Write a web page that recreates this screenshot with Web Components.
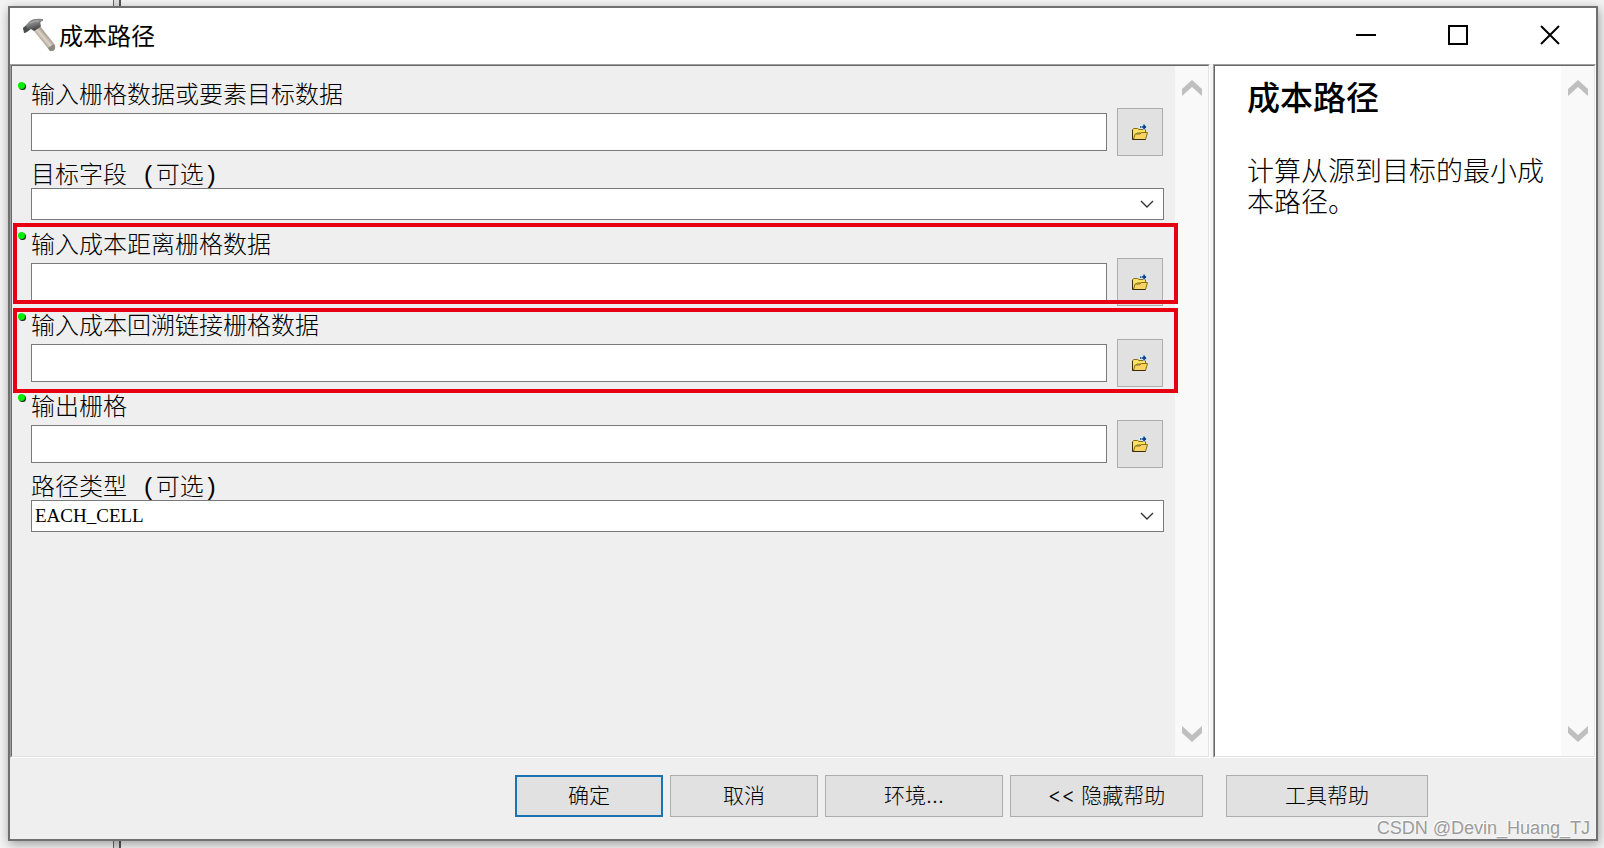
<!DOCTYPE html>
<html lang="zh-CN">
<head>
<meta charset="UTF-8">
<meta name="viewport" content="width=device-width, initial-scale=1.0">
<title>成本路径</title>
<style>
  html, body {
    height: 100%;
    margin: 0;
  }
  body {
    font: 300 24px/28px 'Liberation Mono', 'Noto Sans CJK SC', sans-serif;
    color: #000;
    background: #f1f1f1;
    overflow: hidden;
  }
</style>
</head>
<body>
<tool-dialog>
  <title-bar slot="title">成本路径</title-bar>
  <scroll-pane slot="form">
    <raster-field label="输入栅格数据或要素目标数据" required></raster-field>
    <choice-field label="目标字段 (可选)"></choice-field>
    <raster-field label="输入成本距离栅格数据" required highlight="upper"></raster-field>
    <raster-field label="输入成本回溯链接栅格数据" required highlight="lower"></raster-field>
    <raster-field label="输出栅格" required></raster-field>
    <choice-field label="路径类型 (可选)" value="EACH_CELL"></choice-field>
  </scroll-pane>
  <scroll-pane slot="help" white>
    <help-text heading="成本路径">计算从源到目标的最小成本路径。</help-text>
  </scroll-pane>
  <dialog-button slot="actions" primary>确定</dialog-button>
  <dialog-button slot="actions">取消</dialog-button>
  <dialog-button slot="actions" size="medium">环境...</dialog-button>
  <dialog-button slot="actions" size="large">&lt;&lt; 隐藏帮助</dialog-button>
  <dialog-button slot="actions" size="help">工具帮助</dialog-button>
  <span slot="watermark">CSDN @Devin_Huang_TJ</span>
</tool-dialog>

<script>
// 对话框窗口
class ToolDialog extends HTMLElement {
  constructor() {
    super();
    this.attachShadow({ mode: 'open' });

    this.shadowRoot.innerHTML = `
      <style>
        :host {
          display: flex;
          box-sizing: border-box;
          height: 100vh;
          padding: 6px 6px 7px 8px;
          background:
            linear-gradient(90deg, #666 1px, #dedede 1px, #dedede 6px, #555 6px) 113px 0 / 8px 100% no-repeat,
            #f3f3f3;
        }
        .window {
          position: relative;
          flex: 1;
          min-width: 0;
          display: flex;
          flex-direction: column;
          border: 2px solid #6f6f6f;
          background: #efefef;
          box-shadow: 1px 3px 10px rgba(0, 0, 0, 0.36);
        }
        .panes {
          flex: 1;
          min-height: 0;
          display: grid;
          grid-template-columns: minmax(0, 1fr) 383px;
          column-gap: 3px;
          background: #f4f4f4;
        }
        .actions {
          display: flex;
          justify-content: flex-end;
          gap: 7px;
          padding: 17px 168px 22px 16px;
        }
        .watermark {
          position: absolute;
          right: 6px;
          bottom: 0;
          font: 18px/22px 'Liberation Sans', sans-serif;
          color: #9b9b9b;
          text-shadow: -1px -1px 0 #fff;
        }
      </style>
      <div class="window">
        <slot name="title"></slot>
        <div class="panes">
          <slot name="form"></slot>
          <slot name="help"></slot>
        </div>
        <div class="actions"><slot name="actions"></slot></div>
        <div class="watermark"><slot name="watermark"></slot></div>
      </div>
    `;
  }
}

// 标题栏
class TitleBar extends HTMLElement {
  constructor() {
    super();
    this.attachShadow({ mode: 'open' });

    this.shadowRoot.innerHTML = `
      <style>
        :host {
          display: flex;
          align-items: center;
          box-sizing: border-box;
          height: 56px;
          padding-bottom: 2px;
          background: #fff;
        }
        .hammer {
          width: 34px;
          height: 34px;
          margin: 0 3px 0 12px;
        }
        h1 {
          flex: 1;
          margin: 0;
          font: 400 24px/28px 'Noto Sans CJK SC', sans-serif;
        }
        button {
          display: flex;
          align-items: center;
          justify-content: center;
          width: 92px;
          height: 54px;
          padding: 0;
          border: 0;
          background: none;
        }
        button svg {
          width: 20px;
          height: 20px;
          fill: none;
          stroke: #000;
          stroke-width: 2;
        }
      </style>
      <svg class="hammer" viewBox="0 0 34 34">
        <defs>
          <linearGradient id="wood" x1="0" y1="1" x2="1" y2="0">
            <stop offset="0.35" stop-color="#a39a8a"/>
            <stop offset="0.5" stop-color="#dcd5c8"/>
            <stop offset="0.62" stop-color="#a59d8e"/>
          </linearGradient>
          <linearGradient id="steel" x1="0" y1="0" x2="0.4" y2="1">
            <stop offset="0" stop-color="#666"/>
            <stop offset="0.4" stop-color="#8c8c8c"/>
            <stop offset="1" stop-color="#2f3033"/>
          </linearGradient>
        </defs>
        <path d="M12 13 L18 8 L33 27 Q34 31 31 33 L28 33 Z" fill="url(#wood)"/>
        <path d="M26 30 L32 26 L33 29 Q33 33 30 33 L28 33 Z" fill="#8b8880"/>
        <path d="M1 10 L4 7 L8 3 Q12 0 21 1 L21 3 Q17 3 19 8 L17 10 L12 13 L9 11 L5 14 L2 15 Z" fill="url(#steel)"/>
        <path d="M1 10 L4 8 L6 12 L3 15 Z" fill="#4a4c4f"/>
        <path d="M8 5 Q12 2 17 3" fill="none" stroke="#b4b4b4"/>
      </svg>
      <h1><slot></slot></h1>
      <button type="button" aria-label="最小化">
        <svg viewBox="0 0 20 20"><path d="M0 10H20"/></svg>
      </button>
      <button type="button" aria-label="最大化">
        <svg viewBox="0 0 20 20"><rect x="1" y="1" width="18" height="18"/></svg>
      </button>
      <button type="button" aria-label="关闭">
        <svg viewBox="0 0 20 20"><path d="M1 1L19 19M19 1L1 19"/></svg>
      </button>
    `;
  }
}

// 带滚动条的面板
class ScrollPane extends HTMLElement {
  constructor() {
    super();
    this.attachShadow({ mode: 'open' });

    this.shadowRoot.innerHTML = `
      <style>
        :host {
          display: flex;
          min-width: 0;
          box-sizing: border-box;
          border: 1px solid #a0a0a0;
          border-right-color: #fff;
          border-bottom-color: #fff;
        }
        :host([white]) {
          background: #fff;
        }
        .frame {
          flex: 1;
          min-width: 0;
          display: flex;
          border: 1px solid #696969;
          border-right-color: #e3e3e3;
          border-bottom-color: #e3e3e3;
          background: #efefef;
        }
        :host([white]) .frame {
          background: #fff;
        }
        .content {
          position: relative;
          z-index: 1;
          flex: 1;
          min-width: 0;
        }
        .scrollbar {
          display: flex;
          flex-direction: column;
          justify-content: space-between;
          width: 33px;
          background: #f9f9f9;
        }
        button {
          display: flex;
          align-items: center;
          justify-content: center;
          height: 44px;
          padding: 0;
          border: 0;
          background: none;
        }
        svg {
          width: 20px;
          height: 16px;
          fill: #bfbfbf;
        }
      </style>
      <div class="frame">
        <div class="content"><slot></slot></div>
        <div class="scrollbar">
          <button type="button" aria-label="向上滚动">
            <svg viewBox="0 0 20 16"><path d="M0 9L10 0L20 9V16L10 7L0 16Z"/></svg>
          </button>
          <button type="button" aria-label="向下滚动">
            <svg viewBox="0 0 20 16"><path d="M0 0L10 9L20 0V7L10 16L0 7Z"/></svg>
          </button>
        </div>
      </div>
    `;
  }
}

// 栅格数据输入项
class RasterField extends HTMLElement {
  constructor() {
    super();
    this.attachShadow({ mode: 'open' });

    this.shadowRoot.innerHTML = `
      <style>
        :host {
          display: block;
          position: relative;
          padding: 0 12px 0 19px;
          margin-bottom: 5px;
        }
        :host(:first-child) {
          margin-top: 14px;
        }
        /* 必填项圆点 */
        :host([required])::before {
          content: '';
          position: absolute;
          top: 2px;
          left: 6px;
          width: 7px;
          height: 7px;
          border-radius: 50%;
          background: #00f000;
          box-shadow: 1px 1px 0 #102010;
        }
        /* 红色标注框 */
        :host([highlight])::after {
          content: '';
          position: absolute;
          left: 1px;
          right: -3px;
          border: 4px solid #e60012;
          pointer-events: none;
        }
        :host([highlight='upper'])::after {
          top: -7px;
          bottom: 2px;
        }
        :host([highlight='lower'])::after {
          top: -3px;
          bottom: -6px;
        }
        label {
          display: block;
          padding-top: 6px;
          line-height: 22px;
        }
        .row {
          display: flex;
          align-items: center;
          gap: 10px;
        }
        input {
          flex: 1;
          min-width: 0;
          height: 38px;
          box-sizing: border-box;
          padding: 0 4px;
          border: 1px solid #7a7a7a;
          background: #fff;
          font: inherit;
        }
        button {
          display: flex;
          align-items: center;
          justify-content: center;
          width: 46px;
          height: 48px;
          padding: 0;
          border: 1px solid #adadad;
          background: #e1e1e1;
        }
        svg {
          width: 16px;
          height: 16px;
        }
      </style>
      <label for="path"></label>
      <div class="row">
        <input id="path" type="text">
        <button type="button" aria-label="浏览">
          <svg viewBox="0 0 16 16">
            <path d="M0.5 15V5.5L2 4.5H5.5L7 5.5H13.5V9H5L1.5 15Z" fill="#f9e264" stroke="#8a6d12"/>
            <path d="M1.5 15.5L3 10H8L9.5 8.5H15.5L13.5 15.5Z" fill="#f7d362" stroke="#8a6d12"/>
            <path d="M0.5 6V15.5H13.5" fill="none" stroke="#3a2a08"/>
            <path d="M7 1H11V0H13L15 3L13 6H11V4H7Z" fill="#d2ecff"/>
            <path d="M8 3H9.5M10 3H14M12 0.5V5.5M12 1.5L13.5 3L12 4.5" fill="none" stroke="#0b3c80" stroke-width="1.4"/>
          </svg>
        </button>
      </div>
    `;
  }

  connectedCallback() {
    this.shadowRoot.querySelector('label').textContent = this.getAttribute('label') || '';
  }
}

// 下拉选择项
class ChoiceField extends HTMLElement {
  constructor() {
    super();
    this.attachShadow({ mode: 'open' });

    this.shadowRoot.innerHTML = `
      <style>
        :host {
          display: block;
          padding: 0 11px 0 19px;
          margin-bottom: 10px;
        }
        label {
          display: block;
          padding-top: 5px;
          line-height: 22px;
        }
        .box {
          position: relative;
        }
        select {
          display: block;
          appearance: none;
          width: 100%;
          height: 32px;
          box-sizing: border-box;
          padding: 0 36px 0 3px;
          border: 1px solid #7a7a7a;
          border-radius: 0;
          background: #fff;
          color: #000;
          font: 19px/28px 'Liberation Serif', 'Noto Sans CJK SC', serif;
        }
        svg {
          position: absolute;
          top: 12px;
          right: 10px;
          width: 14px;
          height: 8px;
          fill: none;
          stroke: #333;
          pointer-events: none;
        }
      </style>
      <label for="choice"></label>
      <div class="box">
        <select id="choice"><option></option></select>
        <svg viewBox="0 0 14 8"><path d="M1 1L7 7L13 1" stroke-width="1.4"/></svg>
      </div>
    `;
  }

  connectedCallback() {
    this.shadowRoot.querySelector('label').textContent = this.getAttribute('label') || '';
    this.shadowRoot.querySelector('option').textContent = this.getAttribute('value') || '';
  }
}

// 帮助说明
class HelpText extends HTMLElement {
  constructor() {
    super();
    this.attachShadow({ mode: 'open' });

    this.shadowRoot.innerHTML = `
      <style>
        :host {
          display: block;
          padding: 10px 0 0 32px;
          font: 300 27px/31px 'Noto Sans CJK SC', sans-serif;
        }
        h2 {
          margin: 0 0 38px;
          font: 500 33px/40px 'Noto Sans CJK SC', sans-serif;
        }
        p {
          margin: 0;
        }
      </style>
      <h2></h2>
      <p><slot></slot></p>
    `;
  }

  connectedCallback() {
    this.shadowRoot.querySelector('h2').textContent = this.getAttribute('heading') || '';
  }
}

// 底部按钮
class DialogButton extends HTMLElement {
  constructor() {
    super();
    this.attachShadow({ mode: 'open' });

    this.shadowRoot.innerHTML = `
      <style>
        :host {
          display: block;
          width: 148px;
        }
        :host([size='medium']) {
          width: 178px;
        }
        :host([size='large']) {
          width: 193px;
        }
        :host([size='help']) {
          width: 202px;
          margin-left: 16px;
        }
        button {
          width: 100%;
          height: 42px;
          padding: 0;
          border: 1px solid #adadad;
          background: #e1e1e1;
          color: #000;
          font: 300 21px/28px Inter, 'Noto Sans CJK SC', sans-serif;
        }
        :host([primary]) button {
          border: 2px solid #1874b4;
        }
      </style>
      <button type="button"><slot></slot></button>
    `;
  }
}

// 定义自定义元素
customElements.define('tool-dialog', ToolDialog);
customElements.define('title-bar', TitleBar);
customElements.define('scroll-pane', ScrollPane);
customElements.define('raster-field', RasterField);
customElements.define('choice-field', ChoiceField);
customElements.define('help-text', HelpText);
customElements.define('dialog-button', DialogButton);
</script>
</body>
</html>
